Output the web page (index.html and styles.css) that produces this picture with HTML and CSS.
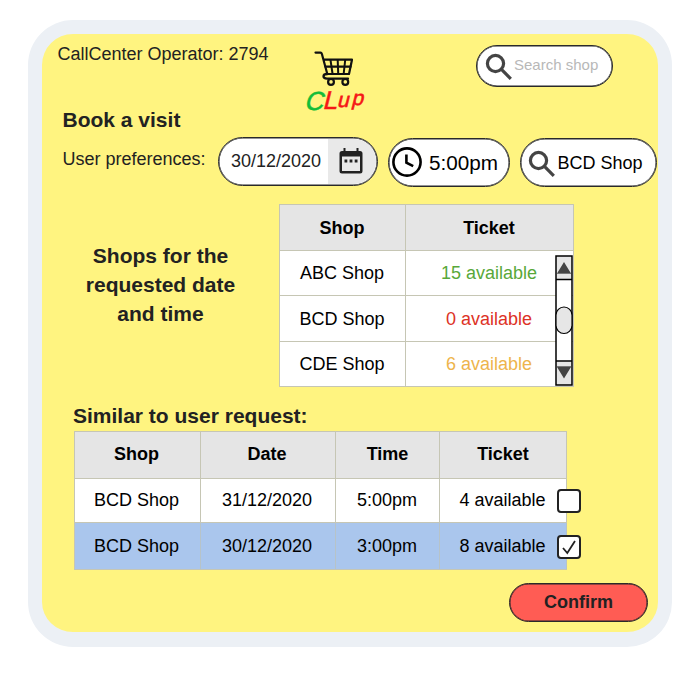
FILE: index.html
```html
<!DOCTYPE html>
<html lang="en">
<head>
<meta charset="utf-8">
<title>Book a visit</title>
<link rel="stylesheet" href="styles.css">
</head>
<body>
<main class="frame">
  <header class="top">
    <div class="operator">CallCenter Operator: 2794</div>
    <svg class="logo" width="64" height="66" viewBox="0 0 64 66">
      <g fill="none" stroke="#111" stroke-linecap="round" stroke-linejoin="round">
        <path d="M10.5 4.6h5q1 0 1.400 1.400L22.300 26H44L47 11.700H18.500" stroke-width="2.200"/>
        <path d="M20.500 18.700h25M22.500 26q-4 0-4 2.300t3.500 2.300h21" stroke-width="2.300"/>
        <path d="M25.500 12l2 13.500M32.700 12l.5 13.500M40.200 12l-1.500 13.500" stroke-width="2"/>
        <circle cx="26" cy="33.900" r="2.900" stroke-width="2.200"/>
        <circle cx="40.300" cy="33.900" r="2.900" stroke-width="2.200"/>
      </g>
      <text class="brand" transform="translate(0 62) skewX(-14)"><tspan class="brand-c" x="-1" y="0">C</tspan><tspan class="brand-l" x="17" y="-1">L</tspan><tspan class="brand-up" x="31" y="-3">u</tspan><tspan class="brand-up" x="45" y="-5">p</tspan></text>
    </svg>
    <div class="pill search">
      <svg width="28" height="28" viewBox="0 0 28 28"><circle cx="10.5" cy="10.5" r="8.1"/><path d="M16.2 16.2l9.6 9.6"/></svg>
      <span>Search shop</span>
    </div>
  </header>

  <h1>Book a visit</h1>
  <section class="prefs">
    <label>User preferences:</label>
    <div class="pill date">
      <span>30/12/2020</span>
      <div class="date-button">
        <svg width="24" height="26" viewBox="0 0 24 26"><path fill="#222" fill-rule="evenodd" d="M4.500 0h2v3h11V0h2v3h1.500q2.500 0 2.500 2.500V23q0 2.500-2.500 2.500H3Q.5 25.500.5 23V5.500Q.5 3 3 3h1.500zM3 8.500V23h18V8.500z"/><path fill="#222" d="M5.500 11.500h2.800v3H5.500zM10.600 11.500h2.800v3h-2.800zM15.700 11.500h2.800v3h-2.800z"/></svg>
      </div>
    </div>
    <div class="pill time">
      <svg width="30" height="30" viewBox="0 0 30 30"><circle cx="15" cy="15" r="13.6"/><path d="M14.4 7.5v8.2l6.8 3.5"/></svg>
      <span>5:00pm</span>
    </div>
    <div class="pill shop">
      <svg width="28" height="28" viewBox="0 0 28 28"><circle cx="10.5" cy="10.5" r="8.1"/><path d="M16.2 16.2l9.6 9.6"/></svg>
      <span>BCD Shop</span>
    </div>
  </section>

  <section class="availability">
    <h2 class="caption">Shops for the<br>requested date<br>and time</h2>
    <div class="table shops">
      <div class="cell head">Shop</div><div class="cell head">Ticket</div>
      <div class="cell">ABC Shop</div><div class="cell green">15 available</div>
      <div class="cell">BCD Shop</div><div class="cell red">0 available</div>
      <div class="cell">CDE Shop</div><div class="cell amber">6 available</div>
      <svg class="scrollbar" width="18" height="131" viewBox="0 0 18 131">
        <path d="M1 1h16v129H1z" fill="#fff"/>
        <path d="M1 1h16v23.5H1zM1 106.5h16V130H1z" fill="#e6e6e6"/>
        <path d="M1 1h16v129H1zM1 24.5h16M1 106h16" fill="none" stroke="#000" stroke-width="1.5"/>
        <rect x="1" y="52" width="16" height="26.5" rx="8" fill="#e6e6e6" stroke="#000" stroke-width="1.2"/>
        <path d="M9 7l7 11.5H2zM2 112h14l-7 11.5z" fill="#444"/>
        <path d="M2 18.5h14M2 111.5h14" stroke="#777"/>
      </svg>
    </div>
  </section>

  <h2 class="similar">Similar to user request:</h2>
  <div class="table matches">
    <div class="cell head">Shop</div><div class="cell head">Date</div><div class="cell head">Time</div><div class="cell head">Ticket</div>
    <div class="cell">BCD Shop</div><div class="cell">31/12/2020</div><div class="cell">5:00pm</div><div class="cell pick">4 available<span class="check"></span></div>
    <div class="cell on">BCD Shop</div><div class="cell on">30/12/2020</div><div class="cell on">3:00pm</div><div class="cell on pick">8 available<span class="check"><svg width="20" height="20" viewBox="0 0 20 20"><path d="M4 11l4.300 5L16 4"/></svg></span></div>
  </div>
  <button class="confirm">Confirm</button>
</main>
</body>
</html>
```
FILE: styles.css
```css
* { box-sizing: border-box; }
body {
  margin: 0;
  background: #fff;
  color: #222;
  font: 18px/20px "Liberation Sans", Arial, sans-serif;
}
.frame {
  width: 644px;
  height: 627px;
  margin: 20px 0 0 28px;
  border: 14px solid #ecf0f5;
  border-bottom-width: 15px;
  border-radius: 45px;
  background: #fff480;
}
.top { display: flex; height: 75px; }
.operator { width: 263px; padding: 10px 0 0 15.5px; }
.logo { margin-top: 14px; flex: none; overflow: visible; }
.brand { font: 26px "Liberation Sans", Arial, sans-serif; }
.brand-c { fill: #13bd38; stroke: #13bd38; stroke-width: .5px; }
.brand-l { fill: #f51616; stroke: #f51616; stroke-width: .5px; }
.brand-up { fill: #f51616; stroke: #f51616; stroke-width: .6px; font-size: 21px; }
.pill {
  display: flex;
  align-items: center;
  flex: none;
  background: #fff;
  border: 1px solid #2a2a2a;
  box-shadow: inset 0 0 0 .5px #2a2a2a;
  border-radius: 25px;
}
.pill svg { flex: none; }
.search {
  width: 137px;
  height: 42px;
  margin: 11px 0 0 107px;
  padding-left: 7.5px;
  color: #b8b8b8;
  font-size: 15px;
}
.search svg { margin-top: 2px; }
.search svg, .shop svg { fill: none; stroke: #444; stroke-width: 3.2px; }
.search span { margin: -3px 0 0 1.5px; }
h1, h2 { margin: 0; font-size: 21px; }
h1 { padding-left: 20.5px; line-height: 22px; }
.prefs { display: flex; height: 73px; padding: 6px 0 0 20px; }
.prefs label { width: 156px; padding: 12px 0 0 .5px; }
.date { width: 160px; height: 49px; margin-right: 10px; padding-left: 12px; }
.date-button {
  display: flex;
  flex: 1;
  align-items: center;
  height: 45px;
  margin: 0 1px 0 7px;
  padding: 0 0 1px 11px;
  border-radius: 0 22px 22px 0;
  background: #e9e9e9;
}
.date span { margin-top: -2px; }
.time { width: 122px; height: 49px; margin: 1px 10px 0 0; padding-left: 2.5px; color: #000; font-size: 20.7px; }
.time svg { fill: none; stroke: #000; stroke-width: 2.6px; margin-top: -1px; }
.time span { margin-left: 7.5px; }
.shop { width: 137px; height: 49px; margin-top: 1px; padding-left: 7px; color: #000; }
.shop svg { margin-top: 2px; }
.shop span { margin-left: 1.5px; }
.availability { display: flex; }
.caption {
  width: 236px;
  padding: 37px 0 0 1px;
  text-align: center;
  line-height: 29px;
}
.table {
  position: relative;
  display: grid;
  border: solid #c6c6b4;
  border-width: 1px 0 0 1px;
  width: max-content;
  color: #000;
}
.shops { grid-template: 46px 45px 46px 45px / 126px 168px; margin-left: 1px; }
.shops .head { padding-bottom: 0; }
.matches { grid-template: 47px 44px 47px / 126px 135px 104px 127px; margin-left: 32px; }
.cell {
  display: flex;
  align-items: center;
  justify-content: center;
  padding-right: 1px;
  border: solid #c6c6b4;
  border-width: 0 1px 1px 0;
  background: #fff;
}
.head { background: #e5e5e5; font-weight: bold; }
.matches .cell { padding-bottom: 2px; }
.matches .on { padding-bottom: 1px; }
.matches .cell:nth-child(4n+1), .matches .cell:nth-child(4n+2) { padding-right: 2px; }
.matches .head:nth-child(3), .matches .head:nth-child(4) { padding-right: 0; }
.cell.on { background: #aac6ed; border-right-color: #b7c3c8; }
.green { color: #58a83a; }
.red { color: #dd3226; }
.amber { color: #eeb44c; }
.scrollbar { position: absolute; right: 1px; bottom: 1px; }
.similar { height: 44px; padding: 18px 0 0 31px; line-height: 22px; }
.pick { position: relative; }
.check {
  position: absolute;
  right: -15px;
  top: 10px;
  width: 24px;
  height: 24px;
  border: 2px solid #222;
  border-radius: 4px;
  background: #fff;
}
.on .check { top: 12px; }
.check svg { display: block; fill: none; stroke: #222; stroke-width: 1.8px; }
.confirm {
  display: block;
  width: 139px;
  height: 39px;
  margin: 13px 0 0 467px;
  border: 1px solid #2a2a2a;
  border-radius: 20px;
  box-shadow: inset 0 0 0 .5px #2a2a2a;
  background: #ff5c54;
  color: #222;
  font: bold 18px "Liberation Sans", Arial, sans-serif;
}
```
